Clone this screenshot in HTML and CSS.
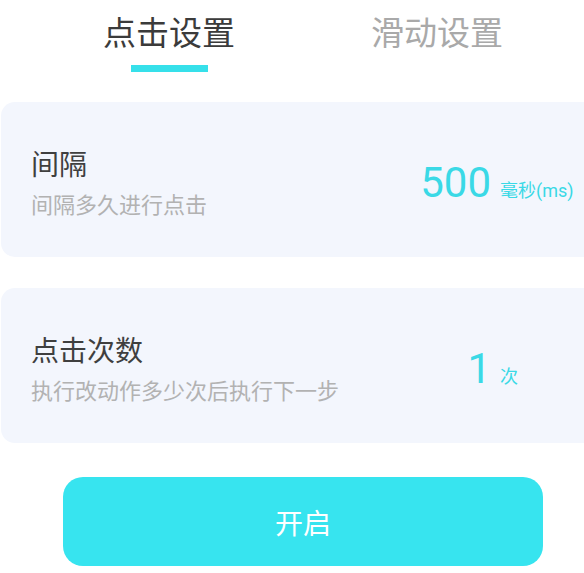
FILE: index.html
```html
<!DOCTYPE html>
<html lang="zh-CN">
<head>
<meta charset="utf-8">
<title>点击设置</title>
<link rel="stylesheet" href="styles.css">
</head>
<body>
<div class="page">
  <div class="tabs">
    <div class="tab active">
      <span class="tab-label">点击设置</span>
      <span class="tab-bar"></span>
    </div>
    <div class="tab">
      <span class="tab-label">滑动设置</span>
    </div>
  </div>

  <div class="card">
    <div class="info">
      <div class="title">间隔</div>
      <div class="desc">间隔多久进行点击</div>
    </div>
    <div class="value">
      <span class="num">500</span>
      <span class="unit">毫秒(ms)</span>
    </div>
  </div>

  <div class="card">
    <div class="info">
      <div class="title">点击次数</div>
      <div class="desc">执行改动作多少次后执行下一步</div>
    </div>
    <div class="value">
      <span class="num">1</span>
      <span class="unit">次</span>
    </div>
  </div>

  <div class="btn-row">
    <button class="btn">开启</button>
  </div>
</div>
</body>
</html>
```

FILE: styles.css
```css
html, body {
  margin: 0;
  padding: 0;
  background: #ffffff;
  overflow: hidden;
}

.page {
  width: 584px;
  height: 573px;
  font-family: "Noto Sans CJK SC", "Roboto", sans-serif;
}

.tabs {
  display: flex;
  padding-left: 103px;
  gap: 136px;
  height: 102px;
}

.tab {
  display: flex;
  flex-direction: column;
  align-items: center;
  width: 132px;
}

.tab-label {
  font-size: 33px;
  line-height: 40px;
  margin-top: 11px;
  color: #a9a9a9;
  white-space: nowrap;
}

.tab.active .tab-label {
  color: #3b3b3b;
}

.tab-bar {
  display: block;
  width: 77px;
  height: 7px;
  margin-top: 14px;
  background: #36e0ea;
}

.card {
  display: flex;
  align-items: flex-start;
  height: 155px;
  margin-left: 1px;
  margin-bottom: 31px;
  box-sizing: border-box;
  padding-left: 30px;
  border-radius: 14px 0 0 14px;
  background: #f3f6fd;
}

.info {
  width: 369px;
  flex: none;
  padding-top: 43px;
}

.title {
  font-size: 28px;
  line-height: 36px;
  color: #3f3f3f;
}

.desc {
  font-size: 22px;
  line-height: 28px;
  margin-top: 8px;
  color: #b2b2b2;
}

.value {
  display: flex;
  align-items: baseline;
  padding-top: 58px;
  color: #3ad9e6;
}

.num {
  display: block;
  width: 91px;
  text-align: right;
  font-family: "Roboto", sans-serif;
  font-size: 42px;
  line-height: 46px;
}

.unit {
  margin-left: 9px;
  font-family: "Roboto", "Noto Sans CJK SC", sans-serif;
  font-size: 18px;
  line-height: 20px;
  white-space: nowrap;
}

.btn-row {
  padding-left: 63px;
  padding-top: 3px;
}

.btn {
  display: block;
  width: 480px;
  height: 89px;
  border: none;
  border-radius: 20px;
  background: #37e4ef;
  color: #ffffff;
  font-family: "Noto Sans CJK SC", sans-serif;
  font-size: 28px;
  padding: 0;
}
```
